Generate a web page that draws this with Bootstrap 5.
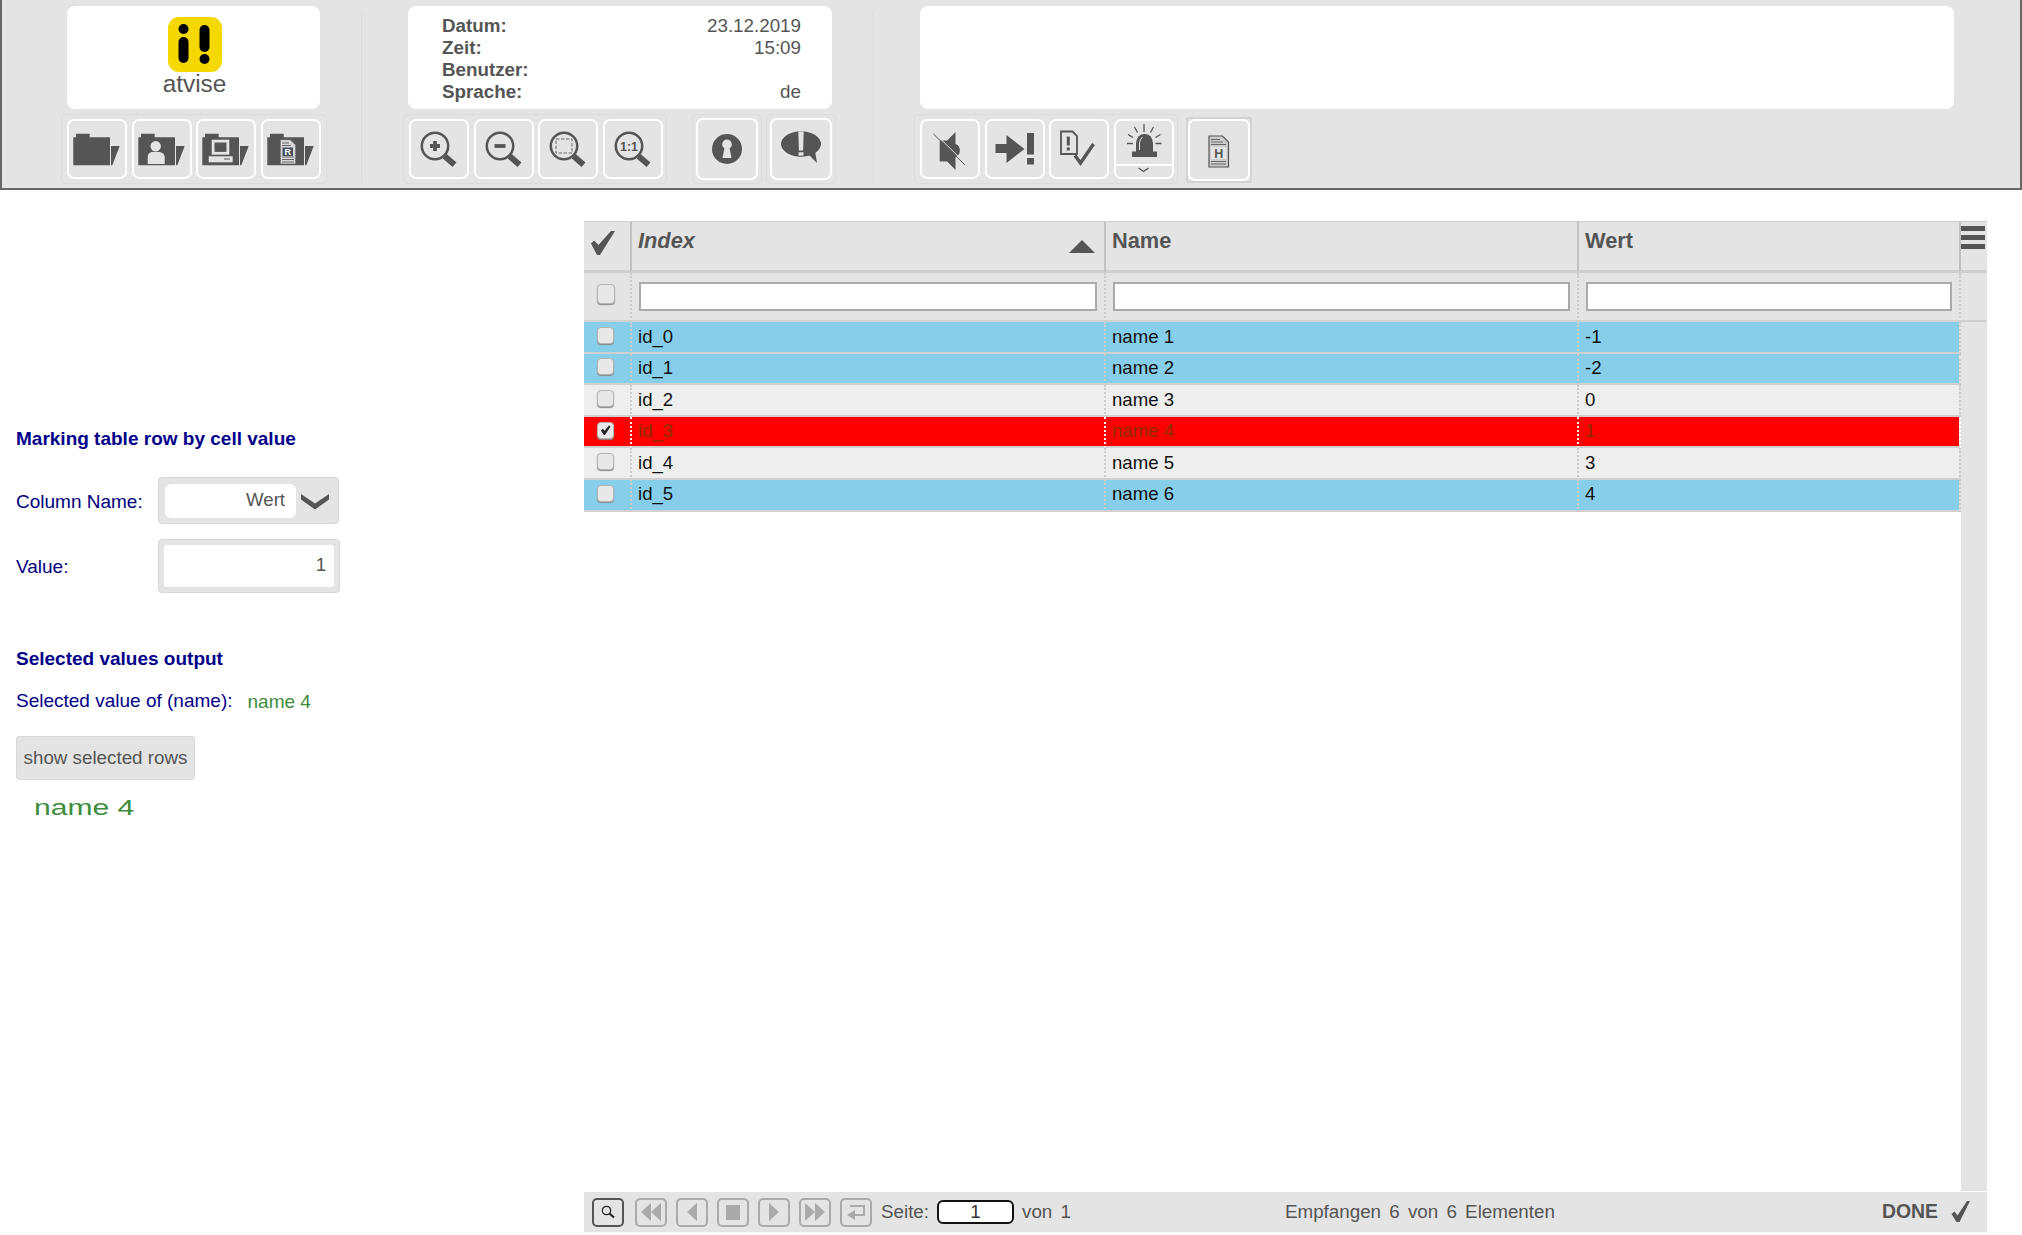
<!DOCTYPE html>
<html lang="en">
<head>
<meta charset="UTF-8" />
<title>atvise table</title>
<link href="https://cdn.jsdelivr.net/npm/bootstrap@5.3.0/dist/css/bootstrap.min.css" rel="stylesheet" crossorigin="anonymous">
<style>
  html, body { height: 100%; }
  body { font-family: "Liberation Sans", Arial, sans-serif; font-size: 18.8px; color: #555; background: #fff; overflow: hidden; }
  .app-header { height: 190px; background: #e4e4e4; border: solid #666; border-width: 0 2px 2px 2px; padding-left: 59px; }
  .head-sep { width: 1px; height: 170px; margin-top: 13px; background: #dcdcdc; }
  .head-section { padding-top: 6px; }
  .panel { height: 103px; background: #fff; border-radius: 8px; }
  .logo-panel { width: 253px; margin-left: 6px; }
  .logo-panel svg { margin: 11px 0 0 2px; }
  .tb-row { margin-top: 5px; }
  .tb-group { height: 70px; padding: 4px 5px; border: 1px solid #dcdcdc; border-radius: 5px; gap: 4.6px; }
  .tb-group.single { padding: 3px; }
  .tb-group.framed { height: 66px; margin-top: 3px; padding: 0; border: 2px solid #d4d4d4; border-radius: 2px; }
  .tb-btn { width: 60px; height: 60px; padding: 0; background: #e4e4e4; border: 2px solid #fff; border-radius: 7px; }
  .tb-btn svg { position: relative; left: -2px; top: -2px; display: block; }
  .single .tb-btn, .framed .tb-btn { width: 62px; height: 62px; }
  .logo-text { font-size: 24.4px; line-height: 22px; margin: 1px 0 0 2px; }
  .info-panel { padding: 9px 31px 0 34px; line-height: 22px; }
  .split-line { position: absolute; left: 0; right: 0; top: 43px; border-top: 2px solid #fff; }

  .side { width: 584px; padding: 238px 0 0 16px; color: #00008b; font-size: 19px; }
  .side h2 { font-size: 19px; line-height: 21px; font-weight: 700; color: #00008b; margin: 0; }
  .side .lbl { width: 142px; padding-top: 3px; color: #000080; }
  .combo { width: 181px; height: 47px; padding: 6px; background: #e4e4e4; border: 1px solid #d6d6d6; border-radius: 4px; }
  .combo svg { margin: 2px 3px 0 auto; }
  .combo-val { width: 131px; height: 34px; padding-right: 11px; background: #fff; border-radius: 6px; color: #555; text-align: right; line-height: 32px; font-size: 18.6px; }
  .value-box { width: 182px; height: 54px; padding: 5px; background: #e4e4e4; border: 1px solid #d6d6d6; border-radius: 4px; }
  .value-box div { height: 42px; padding-right: 8px; background: #fff; border-radius: 3px; color: #555; text-align: right; line-height: 40px; font-size: 18.6px; }
  .green { color: #3c8c3c; }
  .btn-show { width: 179px; height: 44px; margin-top: 24px; padding: 0; background: #e4e4e4; border: 1px solid #d8d8d8; border-radius: 3px; color: #555; font-size: 18.8px; }
  .btn-show:hover { background: #e4e4e4; color: #555; }
  .big-name { display: inline-block; margin: 13px 0 0 18px; font-size: 21.8px; line-height: 30px; transform: scaleX(1.38); transform-origin: left center; }

  .grid-wrap { width: 1403px; padding: 31px 0 3px; }
  .grid.table { width: 1403px; margin: 0; table-layout: fixed; border-collapse: separate; border-spacing: 0; }
  .grid.table > * > tr > * { padding: 0 0 0 6px; border: 0; box-shadow: none; vertical-align: middle; line-height: 1; background: transparent; color: #111; }
  .grid.table > thead > tr.head-row > th { height: 52px; padding-bottom: 6px; vertical-align: top; padding-top: 6px; background: #e4e4e4; border-top: 1px solid #d0d0d0; border-bottom: 3px solid #d0d0d0; color: #555; font-size: 21.8px; line-height: 26px; }
  .grid.table > thead > tr.head-row > th + th { border-left: 2px solid #c0c0c0; }
  .grid.table > thead > tr.filter-row > td { height: 49px; padding: 0 7px 0 7px; background: #e4e4e4; border-bottom: 2px solid #d0d0d0; }
  .grid.table > thead > tr.filter-row > td + td { border-left: 2px dotted #ccc; }
  .grid .form-control { height: 29px; min-height: 0; padding: 0 4px; border: 2px solid #aaa; border-radius: 0; background: #fff; }
  .grid.table > tbody > tr > td { height: 31.6px; background: #eee; border-bottom: 2px solid #d0d0d0; font-size: 18.6px; }
  .grid.table > tbody > tr > td + td { border-left: 2px dotted #ccc; }
  .grid.table > tbody > tr.row-blue > td { background: #87ceeb; }
  .grid.table > tbody > tr.row-red > td { background: #f00; color: #8a3000; }
  .grid.table > tbody > tr.row-red > td + td { border-left-color: #fff; }
  .grid.table > tbody > tr > td.gutter { background: #e4e4e4; border-bottom: 0; padding: 0; border-left-color: #ccc; }
  .grid.table > tbody > tr.row-red > td.gutter { border-left-color: #fff; }
  .sort-mark { position: absolute; right: 9px; top: 18px; display: block; }
  .chk { display: block; width: 17px; height: 17px; margin: -3px 0 0 13px; background: #e8e8e8; border: 1px solid #b4b4b4; border-radius: 4px; box-shadow: 0 1px 1px #888; }
  .chk.big { width: 18px; height: 20px; margin: -5px 0 0 13px; }
  .chk svg { display: block; }
  .scroll-rest { width: 26px; background: #e4e4e4; margin-bottom: 1px; }
  .foot-bar { height: 40px; padding: 0 15px 0 8px; background: #e4e4e4; }
  .foot-left { width: 693px; }
  .nav-btn { width: 32px; height: 29px; padding: 0; margin-right: 9px; background: transparent; border: 2px solid #aaa; border-radius: 5px; }
  .nav-btn.dark { border-color: #555; margin-right: 11px; }
  .nav-btn svg { display: block; margin: auto; }
  .page-input { width: 77px; height: 24px; margin: 0 8px; background: #fff; border: 2px solid #111; border-radius: 6px; text-align: center; line-height: 20px; color: #333; }
  .spaced { word-spacing: 3px; }
  .done { font-size: 19.4px; }
  .done-check { margin-left: 12px; }
</style>
</head>
<body>

<header class="app-header d-flex">
  <section class="head-section d-flex flex-column" style="width:266px">
    <div class="panel logo-panel d-flex flex-column align-items-center">
      <svg width="54" height="55" viewBox="0 0 54 55">
        <rect width="54" height="55" rx="11" fill="#f5d800"/>
        <circle cx="15.5" cy="12" r="5" fill="#000"/>
        <rect x="10.5" y="20" width="10" height="26" rx="5" fill="#000"/>
        <rect x="31.5" y="8" width="10" height="27" rx="5" fill="#000"/>
        <circle cx="36.5" cy="42" r="5" fill="#000"/>
      </svg>
      <div class="logo-text">atvise</div>
    </div>
    <div class="tb-row d-flex">
      <div class="tb-group d-flex">
        <button class="tb-btn"><svg width="60" height="60"><use href="#folder"/></svg></button>
        <button class="tb-btn"><svg width="60" height="60"><use href="#folder"/><circle cx="23.7" cy="27.3" r="5.2" fill="#e4e4e4"/><path d="M15.7 45v-7q0-4 4-5h8q5 1 5 5v7z" fill="#e4e4e4"/></svg></button>
        <button class="tb-btn"><svg width="60" height="60"><use href="#folder"/><rect x="15.7" y="20.7" width="17.6" height="15" fill="#e4e4e4"/><rect x="18.5" y="23.5" width="12" height="9.4" fill="#555"/><rect x="12.7" y="37.3" width="24" height="6" fill="#e4e4e4"/><rect x="28" y="39.5" width="6" height="1" fill="#555"/></svg></button>
        <button class="tb-btn"><svg width="60" height="60"><use href="#folder"/><path d="M19.3 20.7h10l5.4 5.400V45H19.3z" fill="#d8d8d8" stroke="#555" stroke-width=".6"/><path d="M21 24h7M21 26.500h9M21 38h12M21 40.500h12M21 43h12" stroke="#666" stroke-width="1"/><rect x="21.500" y="28.500" width="10.500" height="8.500" fill="#4a4f60"/><text x="26.700" y="36" text-anchor="middle" font-family="Liberation Sans" font-weight="700" font-size="9" fill="#fff">R</text></svg></button>
      </div>
    </div>
  </section>

  <div class="head-sep" style="margin-left:34px"></div>

  <section class="head-section d-flex flex-column" style="width:433px;margin-left:41px">
    <div class="panel info-panel" style="width:424px;margin-left:5px">
      <div class="d-flex justify-content-between"><b>Datum:</b><span>23.12.2019</span></div>
      <div class="d-flex justify-content-between"><b>Zeit:</b><span>15:09</span></div>
      <div class="d-flex justify-content-between"><b>Benutzer:</b><span></span></div>
      <div class="d-flex justify-content-between"><b>Sprache:</b><span>de</span></div>
    </div>
    <div class="tb-row d-flex">
      <div class="tb-group d-flex" style="width:264px">
        <button class="tb-btn"><svg width="60" height="60"><use href="#lens"/><path d="M21 27h10M26 22v10" stroke="#555" stroke-width="3.800"/></svg></button>
        <button class="tb-btn"><svg width="60" height="60"><use href="#lens"/><path d="M20.500 27h11" stroke="#555" stroke-width="3.800"/></svg></button>
        <button class="tb-btn"><svg width="60" height="60"><use href="#lens"/><rect x="18" y="20" width="16" height="14" fill="none" stroke="#666" stroke-width="1" stroke-dasharray="3.400 1.600"/></svg></button>
        <button class="tb-btn"><svg width="60" height="60"><use href="#lens"/><text x="26" y="31.500" text-anchor="middle" font-family="Liberation Sans" font-weight="700" font-size="12.500" fill="#555">1:1</text></svg></button>
      </div>
      <div class="tb-group single d-flex" style="margin-left:25px">
        <button class="tb-btn"><svg width="62" height="62"><circle cx="31" cy="31" r="15" fill="#555"/><path d="M31 21.500a4.800 4.800 0 0 1 2.600 8.800L35.500 40h-9l1.900-9.700A4.800 4.800 0 0 1 31 21.500z" fill="#e4e4e4"/></svg></button>
      </div>
      <div class="tb-group single d-flex" style="margin-left:4px">
        <button class="tb-btn"><svg width="62" height="62"><ellipse cx="31" cy="26" rx="20" ry="12.700" fill="#555"/><path d="M38 36l9 9-2-12z" fill="#555"/><path d="M28.300 13.500h5.400l-.6 19h-4.200z" fill="#e4e4e4"/><rect x="28.500" y="34.300" width="5" height="3.300" fill="#e4e4e4"/></svg></button>
      </div>
    </div>
  </section>

  <div class="head-sep" style="margin-left:36px"></div>

  <section class="head-section d-flex flex-column" style="margin-left:41px">
    <div class="panel" style="width:1034px;margin-left:5.500px"></div>
    <div class="tb-row d-flex">
      <div class="tb-group d-flex" style="width:264px">
        <button class="tb-btn"><svg width="60" height="60"><path d="M19.700 22.500h7.500L35.500 14v12a7 7 0 0 1 0 13v13l-8.300-8.500h-7.500z" fill="#555" transform="translate(0 -1)"/><path d="M13.500 15L45 46" stroke="#555" stroke-width="1"/><path d="M15 14.500L46.500 45.500" stroke="#e4e4e4" stroke-width="1"/></svg></button>
        <button class="tb-btn"><svg width="60" height="60"><path d="M10.500 25.500h11V16.500l18 14-18 14V34.500h-11z" fill="#555" transform="translate(0 -.500)"/><rect x="42" y="14" width="7" height="21.500" fill="#555"/><rect x="42" y="39" width="7" height="6.500" fill="#555"/></svg></button>
        <button class="tb-btn"><svg width="60" height="60"><path d="M12 12.500h11.500l4.500 4.500v18H12z" fill="#e4e4e4" stroke="#555" stroke-width="1.800"/><rect x="17.800" y="17.500" width="3" height="9" fill="#555"/><rect x="17.800" y="28.500" width="3" height="3" fill="#555"/><path d="M26 36.500l5.500 7.500L44.500 25" fill="none" stroke="#555" stroke-width="3.400"/></svg></button>
        <button class="tb-btn position-relative"><svg width="60" height="60"><path d="M22 33V24q1-9 8.500-9T39 24v9z" fill="#555"/><path d="M25.500 31v-7q.5-4 3-6" fill="none" stroke="#e4e4e4" stroke-width="1"/><rect x="18" y="32.500" width="25" height="5.500" fill="#555"/><path d="M30 5v8M20.500 8l3 5.500M39.500 8l-3 5.500M14 15.500l5 3M46.500 15.500l-5 3M13 24.500h6M41.500 24.500h6" stroke="#555" stroke-width="1.300"/><path d="M24.500 49l5 3.500 5-3.500" fill="none" stroke="#555" stroke-width="1.300"/></svg><span class="split-line"></span></button>
      </div>
      <div class="tb-group framed d-flex" style="margin-left:8px">
        <button class="tb-btn"><svg width="62" height="62"><path d="M21 17h13.500l6 6v25H21z" fill="#ccc" stroke="#555" stroke-width="1.200"/><path d="M23 20.500h9M23 23h12M23 25.500h15M23 42.500h15M23 45h15" stroke="#666" stroke-width="1"/><rect x="23" y="28" width="15.500" height="12" fill="#e4e4e4"/><text x="30.700" y="38.600" text-anchor="middle" font-family="Liberation Sans" font-weight="700" font-size="12.500" fill="#555">H</text></svg></button>
      </div>
    </div>
  </section>
</header>

<main class="d-flex" style="height:1045px">
  <aside class="side">
    <h2>Marking table row by cell value</h2>
    <div class="d-flex align-items-center" style="margin-top:28px">
      <div class="lbl">Column Name:</div>
      <div class="combo d-flex align-items-center">
        <div class="combo-val">Wert</div>
        <svg width="28" height="16" viewBox="0 0 28 16"><path d="M0 0l14 9.500L28 0v5.500L14 15.500 0 5.500z" fill="#555"/></svg>
      </div>
    </div>
    <div class="d-flex align-items-center" style="margin-top:15px">
      <div class="lbl">Value:</div>
      <div class="value-box"><div>1</div></div>
    </div>
    <h2 style="margin-top:55px">Selected values output</h2>
    <div class="d-flex" style="margin-top:21px;line-height:21px">
      <span>Selected value of (name):</span>
      <span class="green" style="margin-left:15px;margin-top:1px">name 4</span>
    </div>
    <button class="btn btn-show d-block">show selected rows</button>
    <span class="big-name green">name 4</span>
  </aside>

  <div class="grid-wrap d-flex flex-column">
    <table class="grid table">
      <colgroup><col style="width:46px"><col style="width:474px"><col style="width:473px"><col style="width:382px"><col style="width:28px"></colgroup>
      <thead>
        <tr class="head-row">
          <th class="ps-0"><svg width="46" height="34" viewBox="0 0 46 34"><path d="M7 14.500l3-3 4.500 4.500L27 2h4L16 26h-3z" fill="#555" transform="translate(0 1)"/></svg></th>
          <th class="position-relative"><em>Index</em>
            <svg class="sort-mark" width="26" height="13"><path d="M13 0l13 13H0z" fill="#555"/></svg></th>
          <th>Name</th>
          <th>Wert</th>
          <th class="p-0"><svg class="d-block" width="26" height="30"><path d="M0 6.500h24M0 15.500h24M0 24.500h24" stroke="#555" stroke-width="5"/></svg></th>
        </tr>
        <tr class="filter-row">
          <td class="p-0"><span class="chk big"></span></td>
          <td><input class="form-control" type="text"></td>
          <td><input class="form-control" type="text"></td>
          <td><input class="form-control" type="text"></td>
          <td></td>
        </tr>
      </thead>
      <tbody>
        <tr class="row-blue"><td class="p-0"><span class="chk"></span></td><td>id_0</td><td>name 1</td><td>-1</td><td class="gutter"></td></tr>
        <tr class="row-blue"><td class="p-0"><span class="chk"></span></td><td>id_1</td><td>name 2</td><td>-2</td><td class="gutter"></td></tr>
        <tr><td class="p-0"><span class="chk"></span></td><td>id_2</td><td>name 3</td><td>0</td><td class="gutter"></td></tr>
        <tr class="row-red"><td class="p-0"><span class="chk"><svg width="15" height="15" viewBox="0 0 15 15"><path d="M3 7.500l1.800-1.800 1.800 2L11 2.500l1.500 1L7 12H5.800z" fill="#222"/></svg></span></td><td>id_3</td><td>name 4</td><td>1</td><td class="gutter"></td></tr>
        <tr><td class="p-0"><span class="chk"></span></td><td>id_4</td><td>name 5</td><td>3</td><td class="gutter"></td></tr>
        <tr class="row-blue"><td class="p-0"><span class="chk"></span></td><td>id_5</td><td>name 6</td><td>4</td><td class="gutter"></td></tr>
      </tbody>
    </table>
    <div class="scroll-rest flex-grow-1 align-self-end"></div>
    <div class="foot-bar d-flex align-items-center">
      <div class="foot-left d-flex align-items-center">
        <button class="nav-btn dark"><svg width="16" height="16"><circle cx="6.500" cy="6.500" r="4.200" fill="none" stroke="#222" stroke-width="1.200"/><path d="M9.500 9.500l4.500 4" stroke="#222" stroke-width="2.200"/></svg></button>
        <button class="nav-btn"><svg width="26" height="22"><path d="M13 2v18L3 11zM23 2v18L13 11z" fill="#aaa"/></svg></button>
        <button class="nav-btn"><svg width="16" height="22"><path d="M13 2v18L3 11z" fill="#aaa"/></svg></button>
        <button class="nav-btn"><svg width="14" height="15"><rect width="14" height="15" fill="#aaa"/></svg></button>
        <button class="nav-btn"><svg width="16" height="22"><path d="M3 2v18l10-9z" fill="#aaa"/></svg></button>
        <button class="nav-btn"><svg width="26" height="22"><path d="M3 2v18l10-9zM13 2v18l10-9z" fill="#aaa"/></svg></button>
        <button class="nav-btn"><svg width="22" height="20"><path d="M5 4h14v9H9" fill="none" stroke="#aaa" stroke-width="2"/><path d="M10 8v10l-8-5z" fill="#aaa"/></svg></button>
        <span>Seite:</span>
        <div class="page-input">1</div>
        <span class="spaced">von 1</span>
      </div>
      <span class="spaced">Empfangen 6 von 6 Elementen</span>
      <b class="done ms-auto">DONE</b>
      <svg class="done-check" width="22" height="24" viewBox="0 0 22 24"><path d="M1.500 14l3-2.500 3 4L17 1h3L9.500 22H6.500z" fill="#555"/></svg>
    </div>
  </div>
</main>

<svg width="0" height="0" class="position-absolute">
  <symbol id="folder" viewBox="0 0 60 60">
    <path d="M6.300 46.300V18.300H9V14.700H22.700V18.300H43V46.300zM44 27h8.700L45.300 46.300H44z" fill="#555"/>
  </symbol>
  <symbol id="lens" viewBox="0 0 60 60">
    <circle cx="26" cy="27" r="13.200" fill="none" stroke="#555" stroke-width="2.500"/>
    <path d="M35.700 37.300L45.500 45.800" stroke="#555" stroke-width="6"/>
  </symbol>
</svg>

<script src="https://cdn.jsdelivr.net/npm/bootstrap@5.3.0/dist/js/bootstrap.bundle.min.js" crossorigin="anonymous"></script>
</body>
</html>
